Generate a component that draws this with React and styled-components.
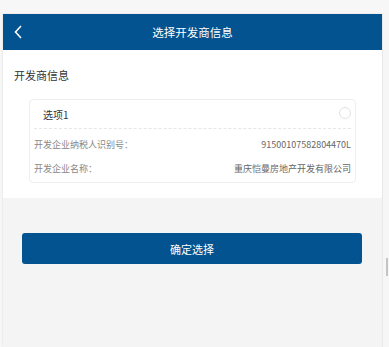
import React from "react";
import styled, { createGlobalStyle } from "styled-components";

const Global = createGlobalStyle`
  html, body { margin: 0; padding: 0; background: #f7f7f7; }
  body { font-family: "Noto Sans CJK SC", "Noto Sans", sans-serif; }
  * { box-sizing: border-box; }
`;

const Page = styled.div`
  display: flex;
  height: 347px;
  padding-top: 14px;
  padding-left: 3px;
  overflow: hidden;
`;

const Phone = styled.div`
  width: 379px;
  display: flex;
  flex-direction: column;
  background: #f4f4f4;
  box-shadow: 0 0 2px rgba(0, 0, 0, 0.12);
`;

const Gutter = styled.div`
  flex: 1;
  border-left: 1px solid #e8e8e8;
  background: #f6f6f6;
  padding-top: 244px;
  display: flex;
  justify-content: flex-end;
  padding-right: 1px;
`;

const Thumb = styled.div`
  width: 2px;
  height: 18px;
  background: #c4c4c4;
`;

const Header = styled.div`
  height: 36px;
  background: #02538f;
  color: #fff;
  display: flex;
  align-items: center;
  justify-content: center;
  position: relative;
  font-size: 11.5px;
`;

const Back = styled.svg`
  position: absolute;
  left: 11px;
  top: 11px;
  width: 8px;
  height: 14px;
`;

const Section = styled.div`
  background: #fff;
  padding: 16px 0 15px;
`;

const SectionTitle = styled.div`
  font-size: 11px;
  color: #333;
  padding-left: 11px;
  line-height: 18px;
  margin-bottom: 15px;
`;

const Card = styled.div`
  margin: 0 26px;
  border: 1px solid #eeeeee;
  border-radius: 4px;
  padding: 0 4px 2px;
`;

const OptionRow = styled.div`
  height: 29px;
  display: flex;
  align-items: center;
  justify-content: space-between;
  padding-left: 9px;
  border-bottom: 1px dashed #e6e6e6;
  font-size: 10px;
  color: #333;
`;

const Radio = styled.span`
  width: 12px;
  height: 12px;
  border-radius: 50%;
  border: 1px solid #e2e2e2;
  margin-top: -3px;
`;

const InfoList = styled.div`
  padding-top: 3px;
`;

const InfoRow = styled.div`
  height: 24px;
  display: flex;
  align-items: center;
  justify-content: space-between;
  font-size: 9px;
`;

const Label = styled.span`
  color: #888;
`;

const Value = styled.span`
  color: #666;
`;

const Actions = styled.div`
  padding: 35px 20px 0 19px;
`;

const Button = styled.button`
  width: 100%;
  height: 31px;
  border: none;
  border-radius: 3px;
  background: #02538f;
  color: #fff;
  font-family: inherit;
  font-size: 11px;
  cursor: pointer;
`;

const rows = [
  ["开发企业纳税人识别号：", "91500107582804470L"],
  ["开发企业名称：", "重庆恺曼房地产开发有限公司"],
];

export default function App() {
  return (
    <>
      <Global />
      <Page>
        <Phone>
          <Header>
            <Back viewBox="0 0 8 14">
              <path d="M7 1L1.5 7L7 13" fill="none" stroke="#fff" strokeWidth="1.6" />
            </Back>
            选择开发商信息
          </Header>
          <Section>
            <SectionTitle>开发商信息</SectionTitle>
            <Card>
              <OptionRow>
                <span>选项1</span>
                <Radio />
              </OptionRow>
              <InfoList>
                {rows.map(([k, v]) => (
                  <InfoRow key={k}>
                    <Label>{k}</Label>
                    <Value>{v}</Value>
                  </InfoRow>
                ))}
              </InfoList>
            </Card>
          </Section>
          <Actions>
            <Button>确定选择</Button>
          </Actions>
        </Phone>
        <Gutter>
          <Thumb />
        </Gutter>
      </Page>
    </>
  );
}
